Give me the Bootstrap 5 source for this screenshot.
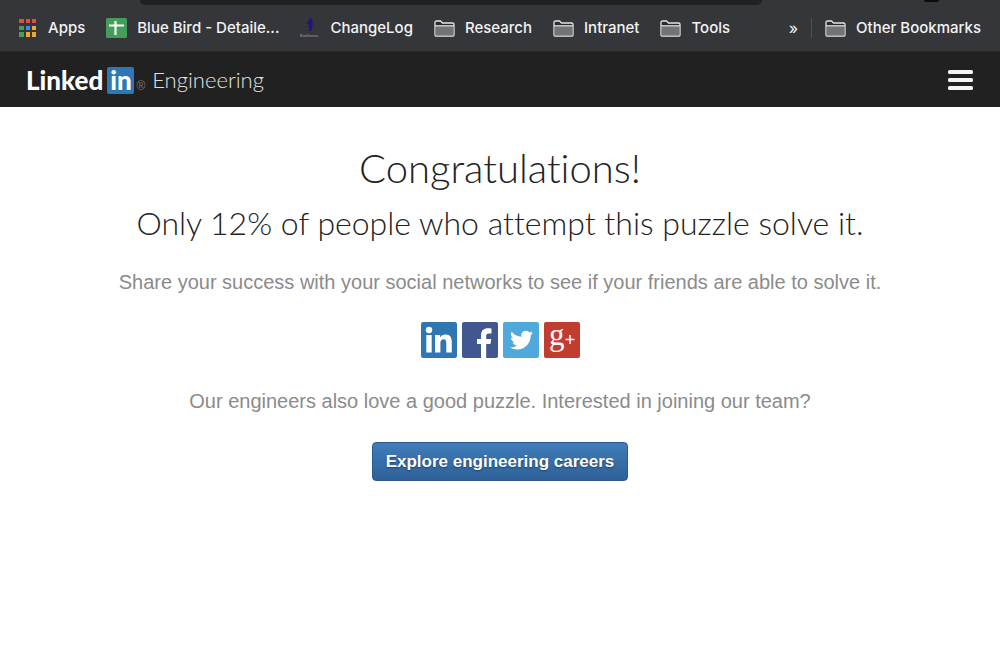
<!DOCTYPE html>
<html lang="en">
<head>
<meta charset="utf-8">
<meta name="viewport" content="width=device-width, initial-scale=1">
<title>LinkedIn Engineering</title>
<link rel="stylesheet" href="https://cdn.jsdelivr.net/npm/bootstrap@5.3.0/dist/css/bootstrap.min.css">
<style>
body { font-family: "Liberation Sans", sans-serif; color: #222; }
.bookmarks { background: #35363a; border-bottom: 1px solid #292a2c; font: 500 15px/20px Inter, sans-serif; height: 52px; padding: 5px 19px 0; }
.bookmarks a { color: #f1f2f3; text-decoration: none; gap: 10px; white-space: nowrap; }
.bookmarks svg { flex: none; }
.bookmark-list { gap: 21px; }
.omnibox { left: 140px; right: 238px; top: 0; height: 5px; background: #202124; border-radius: 0 0 20px 20px; }
.profile-dot { right: 61px; top: 0; width: 15px; height: 2px; background: #0c0c0d; border-radius: 0 0 8px 8px; }
.overflow-btn { color: #f1f2f3; font-size: 16px; }
.divider { width: 1px; height: 20px; background: #505155; margin: 0 13px; }
.site-nav { background: #212121; height: 55px; padding: 1px 26px 0; }
.brand { color: #fff; text-decoration: none; }
.brand:hover { color: #fff; }
.brand-word { font: 900 26px/30px Lato, sans-serif; }
.brand-in { font: 900 26px/26px Lato, sans-serif; background: #2f77b3; border-radius: 2px; width: 27px; height: 27px; margin-left: 4px; text-align: center; }
.brand-reg { font: 12px/12px "Liberation Sans", sans-serif; color: #777; margin: 12px 0 0 2px; }
.brand-sub { font: 300 22px/30px Lato, sans-serif; color: #e0e0e0; margin-left: 7px; }
.main-area { padding-top: 37px; }
.title { font: 300 40px/48px Lato, sans-serif; font-variant-ligatures: none; margin-bottom: 7px; }
.subtitle { font: 300 32px/48px Lato, sans-serif; font-variant-ligatures: none; margin-bottom: 23px; }
.note { font-size: 20px; line-height: 24px; color: #8b8b8b; margin: 0; }
.share-row { gap: 5px; margin: 28px 0 31px; }
.share-row svg { display: block; overflow: visible; }
.btn-careers { font: bold 17px/21px "Liberation Sans", sans-serif; color: #fff; padding: 8px 13px; margin-top: 29px; border: 1px solid #2b5a8b; border-radius: 4px; background: linear-gradient(#3f7dba, #2f6199); text-shadow: 0 1px 2px #1c3f66; }
.btn-careers:hover { color: #fff; border-color: #2b5a8b; }
</style>
<script src="https://cdn.jsdelivr.net/npm/bootstrap@5.3.0/dist/js/bootstrap.bundle.min.js"></script>
</head>
<body>
<svg class="d-none" aria-hidden="true">
  <symbol id="folder" viewBox="0 0 21 17">
    <path d="M1 15V2.500Q1 1 2.500 1H6.500L8.500 3H18.500Q20 3 20 4.500V15Q20 16 19 16H2Q1 16 1 15Z" fill="#2b2c2f" stroke="#e6e6e7" stroke-width="1.300"/>
    <path d="M1.700 6H19.300V15.400H1.700Z" fill="#737477"/>
    <path d="M1 5.800H20" stroke="#e6e6e7" stroke-width="1.200"/>
  </symbol>
</svg>
<nav class="bookmarks d-flex align-items-center position-relative" aria-label="Bookmarks">
  <span class="omnibox position-absolute"></span>
  <span class="profile-dot position-absolute"></span>
  <div class="bookmark-list d-flex align-items-center flex-grow-1">
    <a href="#" class="d-flex align-items-center">
      <svg width="19" height="18" viewBox="0 0 19 18"><g fill="#e84b3c"><path d="M0 0h5v4H0zM7 0h4v4H7zM13 0h4v4h-4z"/></g><g fill="#4a9c5b"><path d="M0 7h5v4H0zM0 13h5v5H0z"/></g><path fill="#4285f4" d="M7 7h4v4H7z"/><path fill="#eba93a" d="M13 7h4v4h-4zM7 13h4v5H7zM13 13h4v5h-4z"/></svg>
      Apps</a>
    <a href="#" class="d-flex align-items-center">
      <svg width="21" height="20" viewBox="0 0 21 20"><rect width="21" height="20" rx="1.500" fill="#459d5a"/><path d="M3 7.500H18M9.500 3V17" stroke="#fff" stroke-width="2.200"/></svg>
      Blue Bird - Detaile...</a>
    <a href="#" class="d-flex align-items-center">
      <svg class="overflow-visible" width="20" height="20" viewBox="0 0 20 20"><path d="M9 1l2-1 1 1 1 1-1 1 1 2-1 2 1 1-1 2 0 2-1 1h-3l2-2-2-2 1-2-1-1-2 0 2-2z" fill="#211779"/><text x="0" y="19" font-family="Liberation Sans" font-size="4" font-weight="bold" fill="#8683a5">Kotlinens</text></svg>
      ChangeLog</a>
    <a href="#" class="d-flex align-items-center"><svg width="21" height="17"><use href="#folder"/></svg>Research</a>
    <a href="#" class="d-flex align-items-center"><svg width="21" height="17"><use href="#folder"/></svg>Intranet</a>
    <a href="#" class="d-flex align-items-center"><svg width="21" height="17"><use href="#folder"/></svg>Tools</a>
  </div>
  <button type="button" class="overflow-btn btn p-0 border-0 lh-1" aria-label="More bookmarks">»</button>
  <span class="divider"></span>
  <a href="#" class="d-flex align-items-center"><svg width="21" height="17"><use href="#folder"/></svg>Other Bookmarks</a>
</nav>
<header class="site-nav d-flex align-items-center justify-content-between">
  <a href="#" class="brand d-flex align-items-center">
    <span class="brand-word">Linked</span><span class="brand-in">in</span><span class="brand-reg">®</span><span class="brand-sub">Engineering</span>
  </a>
  <button type="button" class="btn p-0 border-0 d-flex" aria-label="Menu">
    <svg width="27" height="21" viewBox="0 0 27 21" fill="#f4f4f4"><rect x="1" width="25" height="4" rx="1.500"/><rect x="1" y="8" width="25" height="4" rx="1.500"/><rect x="1" y="16" width="25" height="4" rx="1.500"/></svg>
  </button>
</header>
<main class="main-area container-fluid text-center">
  <h1 class="title">Congratulations!</h1>
  <h2 class="subtitle">Only 12% of people who attempt this puzzle solve it.</h2>
  <p class="note">Share your success with your social networks to see if your friends are able to solve it.</p>
  <div class="share-row d-flex justify-content-center">
    <a href="#" aria-label="Share on LinkedIn"><svg width="36" height="36" viewBox="0 0 36 36"><rect width="36" height="36" rx="2" fill="#2f77b3"/><g fill="#fff"><circle cx="8" cy="8" r="3.200"/><path d="M5.300 13h5.400v17.500H5.300zM14 13h5.200v2.400c1-1.700 3-2.900 5.300-2.900 5 0 6.300 3.400 6.300 8v10h-5.500v-9c0-2.500-.4-4.300-2.700-4.300-2.400 0-3.200 1.800-3.200 4.300v9H14z"/></g></svg></a>
    <a href="#" aria-label="Share on Facebook"><svg width="36" height="36" viewBox="0 0 36 36"><rect width="36" height="36" rx="2" fill="#42568f"/><path d="M19 36V22h-4v-5h4v-3.500c0-5 2.800-7.300 7-7.300 1.500 0 3 .1 3.500.3v4.900h-2.600c-2.200 0-2.700 1.100-2.700 2.700V17h5l-.7 5h-4.300v14z" fill="#fff"/></svg></a>
    <a href="#" aria-label="Share on Twitter"><svg width="36" height="36" viewBox="0 0 36 36"><rect width="36" height="36" rx="2" fill="#50a9dc"/><path transform="translate(7 8.500) scale(.96)" d="M24 2.600c-.9.400-1.800.7-2.800.8 1-.6 1.800-1.600 2.200-2.700-1 .6-2 1-3.100 1.200A4.900 4.900 0 0 0 11.900 6.400C7.800 6.200 4.200 4.200 1.700 1.200.4 3.400 1 6.300 3.200 7.800c-.8 0-1.600-.2-2.200-.6 0 2.300 1.600 4.400 3.900 4.900-.7.200-1.500.2-2.200.1.600 2 2.400 3.400 4.600 3.400A9.900 9.900 0 0 1 0 17.600a14 14 0 0 0 7.500 2.200c9.100 0 14.300-7.700 14-14.600 1-.7 1.800-1.600 2.500-2.600z" fill="#fff"/></svg></a>
    <a href="#" aria-label="Share on Google Plus"><svg width="36" height="36" viewBox="0 0 36 36"><rect width="36" height="36" rx="2" fill="#c03d30"/><text x="5" y="23" font-family="Liberation Serif" font-size="31" fill="#fff">g</text><path d="M21.500 17.500h9M26 13v9" stroke="#fff" stroke-width="1.500"/></svg></a>
  </div>
  <p class="note">Our engineers also love a good puzzle. Interested in joining our team?</p>
  <button type="button" class="btn btn-careers">Explore engineering careers</button>
</main>
</body>
</html>
